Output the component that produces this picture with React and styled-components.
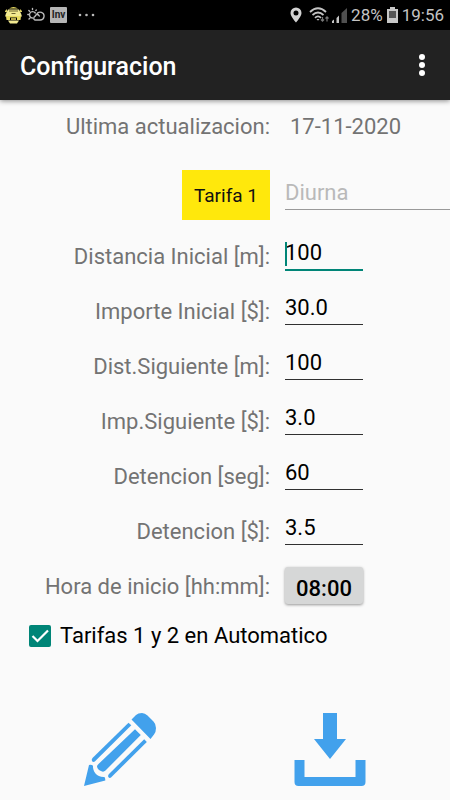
import { useState } from "react";
import styled, { createGlobalStyle } from "styled-components";

const GlobalStyle = createGlobalStyle`
    * {
    box-sizing: border-box;
    }

    body {
    margin: 0;
    background: #fafafa;
    font-family: Roboto, "Liberation Sans", sans-serif;
    }

    button, input {
    font-family: inherit;
    }
`;

const Screen = styled.div`
    min-height: 100vh;
    display: flex;
    flex-direction: column;
    overflow: hidden;
`;

const StatusBar = styled.div`
    display: flex;
    justify-content: space-between;
    align-items: center;
    height: 30px;
    padding: 0 6px 0 5px;
    background: #000;
    color: #c4c4c4;
    font-size: 17px;
`;

const StatusGroup = styled.div`
    display: flex;
    align-items: center;
    gap: ${({ $gap }) => $gap}px;

    svg {
    display: block;
    }
`;

const InvBox = styled.span`
    width: 17px;
    height: 16px;
    border-radius: 1px;
    background: #b5b5b5;
    color: #222;
    font-size: 10px;
    font-weight: 700;
    line-height: 16px;
    text-align: center;
`;

const AppBar = styled.header`
    display: flex;
    justify-content: space-between;
    align-items: center;
    height: 70px;
    padding: 2px 16px 0 20px;
    background: #222;
    box-shadow: 0 1px 5px rgba(0, 0, 0, 0.45);
`;

const Title = styled.h1`
    margin: 0;
    color: #fff;
    font-size: 25px;
    font-weight: 500;
`;

const MenuButton = styled.button`
    display: flex;
    flex-direction: column;
    align-items: center;
    gap: 2px;
    width: 24px;
    padding: 0 0 2px;
    background: transparent;
    border: none;
    cursor: pointer;
`;

const MenuDot = styled.span`
    width: 6px;
    height: 6px;
    border-radius: 100%;
    background: #fff;
`;

const Form = styled.form`
    display: flex;
    flex-direction: column;
`;

const Row = styled.div`
    display: grid;
    grid-template-columns: 60% 1fr;
    align-items: center;
    height: 55px;
`;

const DateRow = styled(Row)`
    height: 52px;
`;

const FareRow = styled(Row)`
    height: 76px;
    padding-top: 10px;
`;

const Label = styled.label`
    padding-top: 1px;
    text-align: right;
    white-space: nowrap;
    color: #737373;
    font-size: 22px;
`;

const DateValue = styled.span`
    padding: 1px 0 0 20px;
    color: #737373;
    font-size: 22px;
`;

const FieldBox = styled.div`
    position: relative;
    width: ${({ $wide }) => ($wide ? "auto" : "78px")};
    height: 34px;
    margin: 0 0 5px 15px;
`;

const Field = styled.input`
    display: block;
    width: 100%;
    height: 34px;
    padding: 0;
    border: none;
    border-bottom: 1px solid ${({ $active }) => ($active ? "#008577" : "#303030")};
    border-radius: 0;
    box-shadow: ${({ $active }) => ($active ? "0 1px 0 #008577" : "none")};
    background: transparent;
    outline: none;
    color: #000;
    font-size: 22px;

    &::placeholder {
    color: #b9b9b9;
    }

    &:placeholder-shown {
    border-bottom-color: #999;
    }
`;

const Caret = styled.span`
    position: absolute;
    top: 6px;
    left: 0;
    width: 2px;
    height: 24px;
    background: #008577;
`;

const FareButton = styled.button`
    justify-self: end;
    width: 88px;
    height: 50px;
    padding: 0;
    border: none;
    background: #ffe80c;
    color: #111;
    font-size: 19px;
    cursor: pointer;
`;

const TimeButton = styled.button`
    width: 78px;
    height: 37px;
    margin-left: 15px;
    padding: 6px 0 0;
    border: none;
    border-radius: 3px;
    background: #d6d7d7;
    box-shadow: 0 1px 3px rgba(0, 0, 0, 0.4);
    color: #000;
    font-size: 22px;
    font-weight: 500;
    line-height: 31px;
    cursor: pointer;
`;

const CheckLabel = styled.label`
    display: flex;
    align-items: center;
    gap: 9px;
    height: 45px;
    padding-left: 29px;
    color: #000;
    font-size: 22px;
`;

const CheckBox = styled.span`
    display: grid;
    width: 22px;
    height: 22px;

    > * {
    grid-area: 1 / 1;
    }

    svg {
    pointer-events: none;
    }
`;

const CheckInput = styled.input`
    appearance: none;
    width: 22px;
    height: 22px;
    margin: 0;
    border: 2px solid #737373;
    border-radius: 2px;

    &:checked {
    border-color: #008577;
    background: #008577;
    }
`;

const Actions = styled.div`
    display: grid;
    grid-template-columns: 1fr 1fr;
    justify-items: center;
    padding: 55px 15px 12px;
`;

const ActionButton = styled.button`
    padding: 0;
    border: none;
    background: transparent;
    cursor: pointer;

    svg {
    display: block;
    }
`;

function TaxiIcon() {
    return (
        <svg width="17" height="18" viewBox="0 0 17 18">
            <path d="M4 2.500Q8.500 -0.500 13 2.500Z" fill="#e8dc62" />
            <path d="M3 3.500H14L16 7.500L17 10.500H0L1 7.500Z" fill="#f2ea91" />
            <path d="M0 5L2 3V6H0ZM15 3L17 5V6H15Z" fill="#d8cc60" />
            <path d="M1 10H16L15.500 14H12V11.500H5V14H1.500Z" fill="#e8dc62" />
            <path d="M6 12H11V14H6Z" fill="#b5aa4c" />
            <path d="M3 14.500H14L12 17.500H5Z" fill="#f2ea91" />
            <path d="M4 5H13M6.500 7.500H10.500" stroke="#6b632c" strokeWidth="1" />
        </svg>
    );
}

function WeatherIcon() {
    return (
        <svg width="18" height="16" viewBox="0 0 18 16" fill="none" stroke="#b9b9b9" strokeWidth="1.400" strokeLinecap="round">
            <path d="M5.500 11A3.200 3.200 0 1 1 8.300 6" />
            <path d="M5.500 1.500V2.500M1.800 3.500L2.600 4.300M0.800 7.500H1.600M2 12L2.800 11.200M9.300 3L8.800 3.600" />
            <path d="M8 13H13A3.900 3.900 0 1 0 9.700 7.200L8 9.300A2 2 0 0 0 8 13M9.700 7.200Q11.500 7.300 12.300 9" />
        </svg>
    );
}

function MoreIcon() {
    return (
        <svg width="17" height="4" viewBox="0 0 17 4" fill="#b9b9b9">
            <circle cx="2" cy="2" r="1.300" />
            <circle cx="8.500" cy="2" r="1.300" />
            <circle cx="15" cy="2" r="1.300" />
        </svg>
    );
}

function PinIcon() {
    return (
        <svg width="12" height="16" viewBox="0 0 12 16" fill="#d2d2d2">
            <path fillRule="evenodd" d="M6 0.500A5.500 5.500 0 0 0 0.500 6C0.500 9.500 6 15.500 6 15.500S11.500 9.500 11.500 6A5.500 5.500 0 0 0 6 0.500ZM6 3.500A2.500 2.500 0 1 1 6 8.500A2.500 2.500 0 0 1 6 3.500Z" />
        </svg>
    );
}

function WifiIcon() {
    return (
        <svg width="21" height="16" viewBox="0 0 21 16" fill="none" stroke="#c4c4c4" strokeWidth="1.800">
            <path d="M1 5Q9 -2.500 17 5" />
            <path d="M3.500 8Q9 3 14.500 8" />
            <path d="M6 10.800Q9 8 12 10.800" />
            <path d="M7.500 12H10.500L9 13.700Z" fill="#c4c4c4" stroke="none" />
            <path d="M13.500 10V14M12 12.500L13.500 14.200L15 12.500M18 14.500V10M16.500 11.500L18 9.800L19.500 11.500" stroke="#777" strokeWidth="1.200" />
        </svg>
    );
}

function SignalIcon() {
    return (
        <svg width="15" height="15" viewBox="0 0 15 15">
            <path d="M0 13L2 11.500V15H0ZM4.500 10L7 7.500V15H4.500Z" fill="#c4c4c4" />
            <path d="M9.500 5L15 0V15H9.500Z" fill="#505050" />
        </svg>
    );
}

function BatteryIcon() {
    return (
        <svg width="11" height="16" viewBox="0 0 11 16">
            <path d="M3 0H8V2H11V16H0V2H3Z" fill="#c8c8c8" />
            <path d="M2 4H9V11H2Z" fill="#565656" />
        </svg>
    );
}

function PencilIcon() {
    return (
        <svg width="72" height="73" viewBox="0 0 72 73" fill="#42a1ec">
            <path d="M47.500 6.500L52 2Q54 0 58 0Q61 0 63.500 2.500L69.500 8.500Q72 11 72 15Q72 19 70 21.500L66.500 26Z" />
            <path d="M44.500 9.700L47.300 12.300L10.800 48.500Q9 49.500 8 48Q7.200 46.500 8.500 45Z" />
            <path d="M51 16.300L56.800 22L21.500 57.500Q19.500 59.500 17 58Q13.500 56.500 13 53.500Q13 52 14.500 51Z" />
            <path d="M60.200 26.200L62.800 29L27 64.500Q25.500 65.500 24.300 64Q23.700 62.500 25 61Z" />
            <path d="M5 52Q7.500 51.500 9 52.700C8.500 58.500 13 64.500 20.500 64Q21.500 65.500 21.300 67.500L0 73Z" />
        </svg>
    );
}

function DownloadIcon() {
    return (
        <svg width="72" height="73" viewBox="0 0 72 73" fill="#42a1ec">
            <path d="M29 0H43V26H52L36 46L20 26H29Z" />
            <path d="M0.500 47H10.500V64H61.500V47H71.500V69Q71.500 73 67.500 73H4.500Q0.500 73 0.500 69Z" />
        </svg>
    );
}

const fields = [
    { id: "distInicial", label: "Distancia Inicial [m]:", value: "100" },
    { id: "impInicial", label: "Importe Inicial [$]:", value: "30.0" },
    { id: "distSiguiente", label: "Dist.Siguiente [m]:", value: "100" },
    { id: "impSiguiente", label: "Imp.Siguiente [$]:", value: "3.0" },
    { id: "detencionSeg", label: "Detencion [seg]:", value: "60" },
    { id: "detencionImp", label: "Detencion [$]:", value: "3.5" },
];

function NumberRow({ id, label, value, active, onFocus, onChange }) {
    return (
        <Row>
            <Label htmlFor={id}>{label}</Label>
            <FieldBox>
                <Field
                    id={id}
                    inputMode="decimal"
                    value={value}
                    $active={active}
                    onFocus={onFocus}
                    onChange={(e) => onChange(e.target.value)}
                />
                {active && <Caret />}
            </FieldBox>
        </Row>
    );
}

export default function App() {
    const [values, setValues] = useState(
        Object.fromEntries(fields.map((field) => [field.id, field.value]))
    );
    const [activeId, setActiveId] = useState("distInicial");
    const [name, setName] = useState("");
    const [auto, setAuto] = useState(true);

    const handleChange = (id, value) => {
        setValues({ ...values, [id]: value });
    };

    return (
        <Screen>
            <GlobalStyle />
            <StatusBar>
                <StatusGroup $gap={11}>
                    <StatusGroup $gap={5}>
                        <TaxiIcon />
                        <WeatherIcon />
                        <InvBox>Inv</InvBox>
                    </StatusGroup>
                    <MoreIcon />
                </StatusGroup>
                <StatusGroup $gap={4}>
                    <StatusGroup $gap={7}>
                        <PinIcon />
                        <StatusGroup $gap={2}>
                            <WifiIcon />
                            <SignalIcon />
                        </StatusGroup>
                    </StatusGroup>
                    <span>28%</span>
                    <BatteryIcon />
                    <span>19:56</span>
                </StatusGroup>
            </StatusBar>
            <AppBar>
                <Title>Configuracion</Title>
                <MenuButton aria-label="Menu">
                    <MenuDot />
                    <MenuDot />
                    <MenuDot />
                </MenuButton>
            </AppBar>
            <Form onSubmit={(e) => e.preventDefault()}>
                <DateRow>
                    <Label as="span">Ultima actualizacion:</Label>
                    <DateValue>17-11-2020</DateValue>
                </DateRow>
                <FareRow>
                    <FareButton type="button">Tarifa 1</FareButton>
                    <FieldBox $wide>
                        <Field
                            aria-label="Nombre de tarifa"
                            placeholder="Diurna"
                            value={name}
                            onChange={(e) => setName(e.target.value)}
                        />
                    </FieldBox>
                </FareRow>
                {fields.map((field) => (
                    <NumberRow
                        key={field.id}
                        id={field.id}
                        label={field.label}
                        value={values[field.id]}
                        active={activeId === field.id}
                        onFocus={() => setActiveId(field.id)}
                        onChange={(value) => handleChange(field.id, value)}
                    />
                ))}
                <Row>
                    <Label htmlFor="horaInicio">Hora de inicio [hh:mm]:</Label>
                    <TimeButton id="horaInicio" type="button">08:00</TimeButton>
                </Row>
                <CheckLabel>
                    <CheckBox>
                        <CheckInput type="checkbox" checked={auto} onChange={() => setAuto(!auto)} />
                        <svg width="22" height="22" viewBox="0 0 22 22" fill="none" stroke="#fff" strokeWidth="2.200">
                            {auto && <path d="M3.500 11L8.500 16L19 5.500" />}
                        </svg>
                    </CheckBox>
                    Tarifas 1 y 2 en Automatico
                </CheckLabel>
            </Form>
            <Actions>
                <ActionButton aria-label="Editar">
                    <PencilIcon />
                </ActionButton>
                <ActionButton aria-label="Descargar">
                    <DownloadIcon />
                </ActionButton>
            </Actions>
        </Screen>
    );
}
